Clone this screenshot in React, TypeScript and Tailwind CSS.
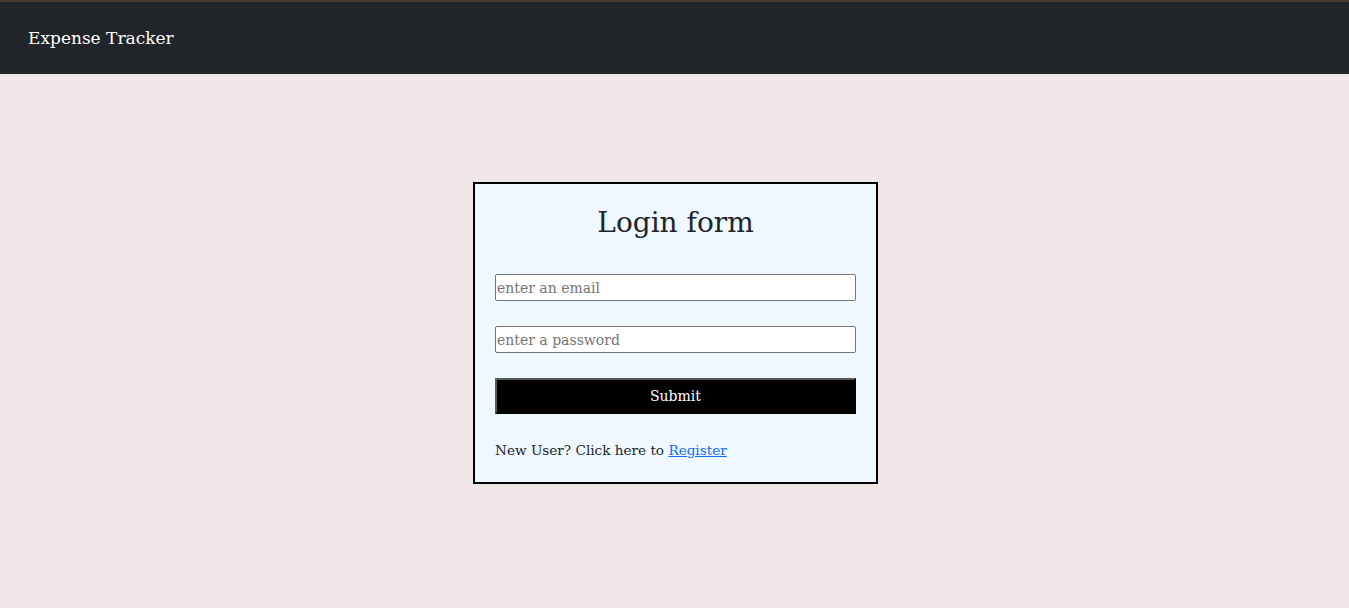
import React from "react";

export default function App() {
  return (
    <div className="min-h-screen bg-[#f0e6e7] font-['DejaVu_Serif',serif]">
      <nav className="h-[74px] bg-[#212529] border-t-2 border-[#4b3a2f] flex items-center px-[28px]">
        <span className="text-white text-[17px] pt-[2px]">Expense Tracker</span>
      </nav>

      <div className="flex justify-center pt-[108px] pl-[2px]">
        <form
          onSubmit={(e) => e.preventDefault()}
          className="w-[405px] bg-[#f0f8ff] border-2 border-black px-[20px] pt-[20px] pb-[22px]"
        >
          <h2 className="text-center text-[28px] leading-[38px] text-[#212529] mb-[32px]">Login form</h2>

          <input
            type="email"
            placeholder="enter an email"
            className="block w-full h-[27px] bg-white border border-[#767676] rounded-[2px] px-[1px] text-[14px] placeholder-[#757575] mb-[25px]"
          />
          <input
            type="password"
            placeholder="enter a password"
            className="block w-full h-[27px] bg-white border border-[#767676] rounded-[2px] px-[1px] text-[14px] placeholder-[#757575] mb-[25px]"
          />

          <button
            type="submit"
            className="block w-full h-[36px] bg-black text-white text-[14px] border-2 border-t-[#5a5a5a] border-l-[#5a5a5a] border-b-black border-r-black"
          >
            Submit
          </button>

          <p className="mt-[26px] text-[13.6px] leading-[20px] text-[#212529]">
            New User? Click here to{" "}
            <a href="#" className="text-[#0d6efd] underline">
              Register
            </a>
          </p>
        </form>
      </div>
    </div>
  );
}
